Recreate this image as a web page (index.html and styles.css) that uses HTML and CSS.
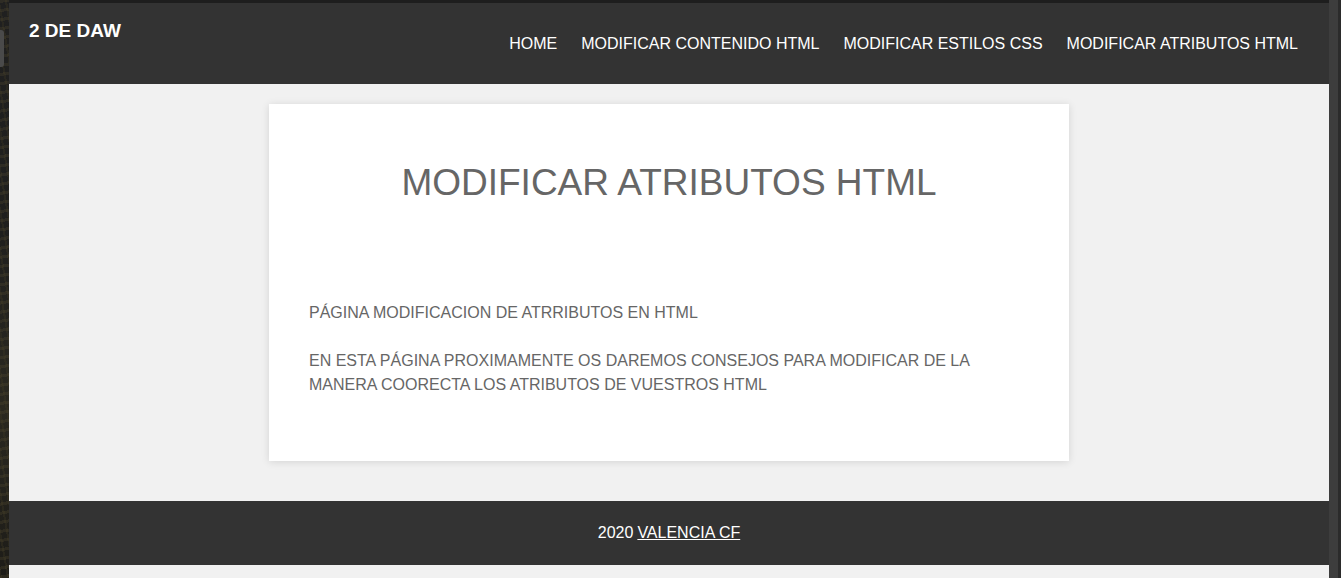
FILE: index.html
```html
<!DOCTYPE html>
<html lang="es">
<head>
<meta charset="utf-8">
<title>Modificar atributos HTML</title>
<link rel="stylesheet" href="styles.css">
</head>
<body>
<div class="desk-left"><span class="desk-tab"></span></div>
<div class="window">
  <div class="topline"></div>
  <header class="site-header">
    <div class="brand">2 DE DAW</div>
    <nav class="nav">
      <a href="#">HOME</a>
      <a href="#">MODIFICAR CONTENIDO HTML</a>
      <a href="#">MODIFICAR ESTILOS CSS</a>
      <a href="#">MODIFICAR ATRIBUTOS HTML</a>
    </nav>
  </header>
  <main class="content">
    <section class="card">
      <h1 class="title">MODIFICAR ATRIBUTOS HTML</h1>
      <p class="text first">PÁGINA MODIFICACION DE ATRRIBUTOS EN HTML</p>
      <p class="text">EN ESTA PÁGINA PROXIMAMENTE OS DAREMOS CONSEJOS PARA MODIFICAR DE LA MANERA COORECTA LOS ATRIBUTOS DE VUESTROS HTML</p>
    </section>
  </main>
  <footer class="site-footer">2020 <a href="#">VALENCIA CF</a></footer>
  <div class="after"></div>
</div>
<div class="desk-right"><div class="scroll"></div><div class="edge"></div></div>
</body>
</html>
```
FILE: styles.css
```css
html, body {
  margin: 0;
  padding: 0;
}
body {
  display: flex;
  width: 1341px;
  height: 578px;
  overflow: hidden;
  font-family: "Liberation Sans", Arial, sans-serif;
  background: #222;
}
.desk-left {
  position: relative;
  width: 9px;
  flex: none;
  background:
    repeating-linear-gradient(170deg, rgba(90,80,50,0.25) 0 3px, rgba(0,0,0,0) 3px 9px),
    repeating-linear-gradient(80deg, rgba(60,55,35,0.35) 0 2px, rgba(0,0,0,0) 2px 7px),
    linear-gradient(#202020 0, #1f1f1d 40%, #2a2820 70%, #1d1c18 100%);
}
.desk-tab {
  position: absolute;
  left: 0;
  top: 30px;
  width: 4px;
  height: 37px;
  background: #4a4a4a;
  border-radius: 0 3px 3px 0;
}
.window {
  width: 1320px;
  flex: none;
  display: flex;
  flex-direction: column;
  background: #f1f1f1;
}
.topline {
  height: 3px;
  background: #1e1e1e;
}
.site-header {
  height: 81px;
  background: #333;
  display: flex;
  justify-content: space-between;
  align-items: flex-start;
  padding: 0 31px 0 20px;
}
.brand {
  color: #fff;
  font-weight: bold;
  font-size: 19px;
  margin-top: 17px;
}
.nav {
  display: flex;
  gap: 24px;
  margin-top: 32px;
}
.nav a {
  color: #fff;
  text-decoration: none;
  font-size: 16px;
}
.content {
  height: 417px;
  padding-top: 20px;
  box-sizing: border-box;
  display: flex;
  justify-content: center;
  align-items: flex-start;
}
.card {
  width: 800px;
  height: 357px;
  box-sizing: border-box;
  background: #fff;
  padding: 58px 40px 0 40px;
  box-shadow: 0 1px 8px rgba(0, 0, 0, 0.12);
  color: #666;
}
.title {
  margin: 0;
  text-align: center;
  font-weight: normal;
  font-size: 37px;
  color: #666;
}
.text {
  margin: 0 0 24px 0;
  font-size: 16px;
  line-height: 24px;
}
.text.first {
  margin-top: 97px;
}
.site-footer {
  height: 64px;
  background: #333;
  color: #fff;
  font-size: 16px;
  display: flex;
  align-items: center;
  justify-content: center;
  gap: 4px;
}
.site-footer a {
  color: #fff;
  text-decoration: underline;
}
.after {
  flex: 1;
  background: #f1f1f1;
}
.desk-right {
  width: 12px;
  flex: none;
  display: flex;
}
.scroll {
  width: 9px;
  background: #3d3d3d;
}
.edge {
  width: 3px;
  background: #2b2b2b;
}
```
